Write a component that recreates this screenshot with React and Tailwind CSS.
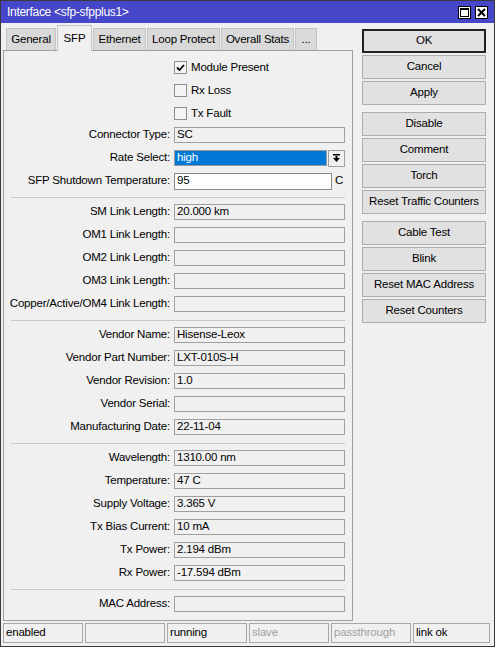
import React from 'react';

const checks = [
  { label: 'Module Present', checked: true },
  { label: 'Rx Loss', checked: false },
  { label: 'Tx Fault', checked: false },
];

const groups = [
  [
    { label: 'SM Link Length', value: '20.000 km' },
    { label: 'OM1 Link Length', value: '' },
    { label: 'OM2 Link Length', value: '' },
    { label: 'OM3 Link Length', value: '' },
    { label: 'Copper/Active/OM4 Link Length', value: '' },
  ],
  [
    { label: 'Vendor Name', value: 'Hisense-Leox' },
    { label: 'Vendor Part Number', value: 'LXT-010S-H' },
    { label: 'Vendor Revision', value: '1.0' },
    { label: 'Vendor Serial', value: '' },
    { label: 'Manufacturing Date', value: '22-11-04' },
  ],
  [
    { label: 'Wavelength', value: '1310.00 nm' },
    { label: 'Temperature', value: '47 C' },
    { label: 'Supply Voltage', value: '3.365 V' },
    { label: 'Tx Bias Current', value: '10 mA' },
    { label: 'Tx Power', value: '2.194 dBm' },
    { label: 'Rx Power', value: '-17.594 dBm' },
  ],
  [{ label: 'MAC Address', value: '' }],
];

const tabs = [
  { label: 'General', w: 'w-[50px]' },
  { label: 'SFP', w: 'w-[35px]', active: true },
  { label: 'Ethernet', w: 'w-[53px]' },
  { label: 'Loop Protect', w: 'w-[73px]' },
  { label: 'Overall Stats', w: 'w-[73px]' },
  { label: '...', w: 'w-[22px]' },
];

const buttonGroups = [
  ['OK', 'Cancel', 'Apply'],
  ['Disable', 'Comment', 'Torch', 'Reset Traffic Counters'],
  ['Cable Test', 'Blink', 'Reset MAC Address', 'Reset Counters'],
];

const status = [
  { text: 'enabled', w: 'w-[80px]' },
  { text: '', w: 'w-[80px]' },
  { text: 'running', w: 'w-[80px]' },
  { text: 'slave', w: 'w-[80px]', dim: true },
  { text: 'passthrough', w: 'w-[80px]', dim: true },
  { text: 'link ok', w: 'w-[77px]' },
];

function Label({ children }) {
  return <div className="w-[167px] shrink-0 pr-px text-right whitespace-nowrap">{children}:</div>;
}

function Field({ label, value }) {
  return (
    <div className="flex h-[16px] items-center">
      <Label>{label}</Label>
      <div className="ml-[3px] flex h-[16px] flex-1 items-center border border-[#a0a0a0] pl-[2px] whitespace-nowrap">
        {value}
      </div>
    </div>
  );
}

function Separator() {
  return <div className="ml-[7px] h-[2px] -mb-px border-b border-[#c8c8c8]" />;
}

export default function App() {
  return (
    <div className="flex h-[647px] w-[495px] flex-col overflow-hidden border border-[#3a3a3a] bg-[#f0f0f0] font-['Liberation_Sans',Arial,sans-serif] text-[11.5px] leading-none tracking-[-0.2px] text-black">
      <div className="flex h-[22px] shrink-0 items-center justify-between bg-[#4646c8] pl-[6px] pr-[6px] text-white">
        <span className="text-[12px] tracking-[-0.3px]">Interface &lt;sfp-sfpplus1&gt;</span>
        <div className="flex gap-[4px]">
          <div className="flex h-[13px] w-[13px] items-center justify-center border border-black bg-white">
            <div className="h-[9px] w-[9px] border border-t-2 border-black" />
          </div>
          <div className="flex h-[13px] w-[13px] items-center justify-center border border-black bg-white">
            <svg width="9" height="9" viewBox="0 0 9 9">
              <path d="M1 1 L8 8 M8 1 L1 8" stroke="black" strokeWidth="2" />
            </svg>
          </div>
        </div>
      </div>

      <div className="flex flex-1">
        <div className="ml-[2px] flex w-[350px] flex-col pt-[2px]">
          <div className="flex h-[25px] items-end gap-px pl-[3px]">
            {tabs.map((tab) =>
              tab.active ? (
                <div
                  key={tab.label}
                  className={`relative z-10 -mb-px flex h-[26px] ${tab.w} items-start justify-center border border-b-0 border-[#c4c4c4] bg-[#f0f0f0] pt-[7px]`}
                >
                  {tab.label}
                </div>
              ) : (
                <div
                  key={tab.label}
                  className={`flex h-[22px] ${tab.w} items-center justify-center border border-b-0 border-[#c4c4c4] bg-[#d9d9d9] pt-px`}
                >
                  {tab.label}
                </div>
              ),
            )}
          </div>

          <div className="flex flex-1 flex-col border border-[#a0a0a0] pr-[7px] pt-[5px]">
            <div className="mb-[2px] flex flex-col">
              {checks.map((c) => (
                <div key={c.label} className="flex h-[23px] items-center pl-[170px]">
                  <div className="flex h-[13px] w-[13px] items-center justify-center border border-[#8f8f8f] bg-[#f4f4f4]">
                    {c.checked ? (
                      <svg width="9" height="9" viewBox="0 0 9 9">
                        <path d="M1 4.5 L3.5 7 L8 2" fill="none" stroke="black" strokeWidth="1.8" />
                      </svg>
                    ) : null}
                  </div>
                  <span className="ml-[4px]">{c.label}</span>
                </div>
              ))}
            </div>

            <div className="flex flex-col gap-[7px]">
              <Field label="Connector Type" value="SC" />
              <div className="flex h-[16px] items-center">
                <Label>Rate Select</Label>
                <div className="ml-[3px] flex h-[16px] flex-1 items-center border border-[#9a9a9a] bg-[#0078d7] pl-[2px] text-white">
                  high
                </div>
                <div className="ml-[1px] flex h-[17px] w-[17px] items-center justify-center border border-[#a0a0a0] bg-[#f0f0f0]">
                  <svg width="9" height="9" viewBox="0 0 9 9">
                    <rect x="1" y="0" width="7" height="1.5" fill="black" />
                    <rect x="3.5" y="2" width="2" height="2" fill="black" />
                    <path d="M1 4 L8 4 L4.5 8 Z" fill="black" />
                  </svg>
                </div>
              </div>
              <div className="flex h-[16px] items-center">
                <Label>SFP Shutdown Temperature</Label>
                <div className="ml-[3px] flex h-[17px] flex-1 items-center border border-[#8a8a8a] bg-white pl-[2px]">
                  95
                </div>
                <span className="ml-[3px] w-[10px]">C</span>
              </div>

              {groups.map((group, gi) => (
                <React.Fragment key={gi}>
                  <Separator />
                  {group.map((f) => (
                    <Field key={f.label} label={f.label} value={f.value} />
                  ))}
                </React.Fragment>
              ))}
            </div>
          </div>
        </div>

        <div className="ml-[9px] flex w-[124px] flex-col pt-[6px]">
          {buttonGroups.map((group, gi) => (
            <div key={gi} className={`flex flex-col gap-[2px] ${gi > 0 ? 'mt-[7px]' : ''}`}>
              {group.map((label) => (
                <div
                  key={label}
                  className={`flex h-[24px] items-center justify-center whitespace-nowrap bg-[#e1e1e1] ${
                    label === 'OK' ? 'border-2 border-[#222]' : 'border border-[#adadad]'
                  }`}
                >
                  {label}
                </div>
              ))}
            </div>
          ))}
        </div>
      </div>

      <div className="mb-[3px] ml-[2px] mt-[2px] flex h-[20px] shrink-0 gap-[2px]">
        {status.map((s, i) => (
          <div
            key={i}
            className={`flex ${s.w} items-center border border-[#a8a8a8] pl-[2px] ${s.dim ? 'text-[#a0a0a0]' : ''}`}
          >
            {s.text}
          </div>
        ))}
      </div>
    </div>
  );
}
